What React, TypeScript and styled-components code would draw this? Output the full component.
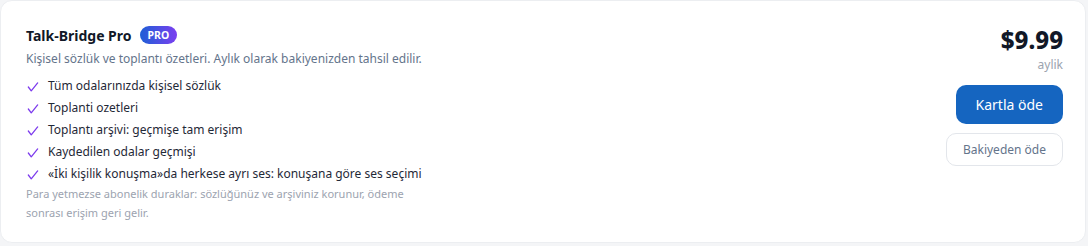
import React from "react";
import styled, { createGlobalStyle } from "styled-components";

const Global = createGlobalStyle`
  html, body { margin: 0; padding: 0; background: #f4f5f7; }
  body { font-family: "Noto Sans", "Open Sans", sans-serif; }
  * { box-sizing: border-box; }
`;

const Card = styled.div`
  width: 1086px;
  height: 243px;
  background: #ffffff;
  border: 1px solid #eceef1;
  border-radius: 12px;
  padding: 22px 22px 20px 25px;
  display: flex;
  justify-content: space-between;
  align-items: flex-start;
`;

const Left = styled.div`
  display: flex;
  flex-direction: column;
  width: 410px;
`;

const TitleRow = styled.div`
  display: flex;
  align-items: center;
  gap: 8px;
  height: 24px;
`;

const Title = styled.div`
  font-size: 14px;
  font-weight: 700;
  color: #111827;
`;

const Badge = styled.span`
  background: linear-gradient(90deg, #1d5fd6 0%, #7b3ff0 100%);
  color: #fff;
  font-size: 10.5px;
  font-weight: 700;
  border-radius: 999px;
  padding: 1px 8px;
  line-height: 16px;
`;

const Subtitle = styled.div`
  margin-top: 3px;
  font-size: 12px;
  color: #64748b;
  line-height: 18px;
  white-space: nowrap;
`;

const List = styled.ul`
  list-style: none;
  margin: 6px 0 0;
  padding: 0;
  display: flex;
  flex-direction: column;
`;

const Item = styled.li`
  display: flex;
  align-items: center;
  gap: 8px;
  height: 22px;
  font-size: 12px;
  color: #1f2937;
  white-space: nowrap;

  svg {
    margin-top: 3px;
    flex-shrink: 0;
  }
`;

const Note = styled.div`
  margin-top: 0px;
  font-size: 11px;
  line-height: 19px;
  color: #9ca3af;
`;

const Right = styled.div`
  display: flex;
  flex-direction: column;
  align-items: flex-end;
`;

const Price = styled.div`
  font-size: 24px;
  font-weight: 800;
  color: #111827;
  line-height: 32px;
  margin-top: 1px;
`;

const Period = styled.div`
  font-size: 12px;
  color: #9ca3af;
  line-height: 16px;
  margin-top: 1px;
`;

const PrimaryButton = styled.button`
  margin-top: 12px;
  height: 39px;
  padding: 0 20px;
  border: none;
  border-radius: 10px;
  background: #1565c0;
  color: #fff;
  font-family: inherit;
  font-size: 14px;
  cursor: pointer;
`;

const SecondaryButton = styled.button`
  margin-top: 9px;
  height: 33px;
  padding: 0 16px;
  border: 1px solid #e3e6eb;
  border-radius: 10px;
  background: #fff;
  color: #64748b;
  font-family: inherit;
  font-size: 12px;
  cursor: pointer;
`;

const Check = () => (
  <svg width="14" height="14" viewBox="0 0 24 24" fill="none" stroke="#7c3aed" strokeWidth="2.2" strokeLinecap="round" strokeLinejoin="round">
    <path d="M4 12l5 6.5L20 5" />
  </svg>
);

const features = [
  "Tüm odalarınızda kişisel sözlük",
  "Toplanti ozetleri",
  "Toplantı arşivi: geçmişe tam erişim",
  "Kaydedilen odalar geçmişi",
  "«İki kişilik konuşma»da herkese ayrı ses: konuşana göre ses seçimi",
];

export default function App() {
  return (
    <>
      <Global />
      <Card>
        <Left>
          <TitleRow>
            <Title>Talk-Bridge Pro</Title>
            <Badge>PRO</Badge>
          </TitleRow>
          <Subtitle>Kişisel sözlük ve toplantı özetleri. Aylık olarak bakiyenizden tahsil edilir.</Subtitle>
          <List>
            {features.map((f) => (
              <Item key={f}>
                <Check />
                {f}
              </Item>
            ))}
          </List>
          <Note>
            Para yetmezse abonelik duraklar: sözlüğünüz ve arşiviniz korunur, ödeme sonrası erişim geri gelir.
          </Note>
        </Left>
        <Right>
          <Price>$9.99</Price>
          <Period>aylik</Period>
          <PrimaryButton>Kartla öde</PrimaryButton>
          <SecondaryButton>Bakiyeden öde</SecondaryButton>
        </Right>
      </Card>
    </>
  );
}
